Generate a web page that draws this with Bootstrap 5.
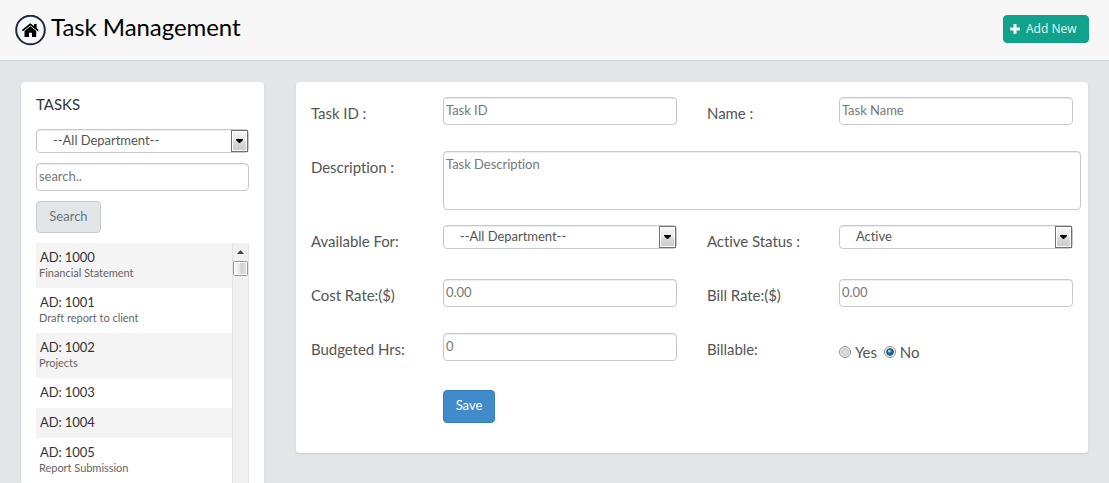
<!DOCTYPE html>
<html lang="en">
<head>
<meta charset="utf-8">
<meta name="viewport" content="width=device-width, initial-scale=1">
<title>Task Management</title>
<link rel="stylesheet" href="https://cdn.jsdelivr.net/npm/bootstrap@5.3.0/dist/css/bootstrap.min.css">
<style>
  body { font-family: Lato, "Liberation Sans", sans-serif; font-size: 13px; line-height: 20px; color: #555; background: #e2e6e9; height: 483px; overflow: hidden; }
  .topbar { height: 61px; background: #f7f7f7; border-bottom: 1px solid #d3d6db; padding: 0 20px 0 15px; }
  .page-title { font-size: 24px; line-height: 30px; color: #000; margin: -6px 0 0 5px; font-weight: 400; letter-spacing: -.06px; }
  .btn-add { --bs-btn-color: #e9f6f3; --bs-btn-bg: #10a28b; --bs-btn-border-color: #10a28b; font: 12px/18px "Open Sans", sans-serif; height: 28px; width: 86px; padding: 0 0 0 6px; border-radius: 4px; margin-top: -3px; }
  .btn-add span { padding-left: 6px; }
  .panel { background: #fff; border: 0; border-radius: 4px; box-shadow: 0 1px 2px rgba(0,0,0,.12); }
  .workspace { padding: 21px 21px 0; gap: 32px; }
  .side-panel { width: 243px; height: 401px; padding: 13px 15px 0; overflow: hidden; border-radius: 4px 4px 0 0; }
  .form-panel { width: 792px; height: 371px; padding-top: 15px; }
  .panel-heading { font-size: 15px; line-height: 20px; color: #333; margin: -1px 0 15px; font-weight: 400; }
  .form-control { height: 28px; min-height: 0; padding: 0 2px 2px; font-size: 13px; line-height: 20px; border: 1px solid #c8c8c8; border-radius: 4px; box-shadow: inset 0 1px 1px rgba(0,0,0,.075); letter-spacing: -.03px; }
  .form-control::placeholder { color: #777; }
  .form-panel .form-control { padding-bottom: 3px; }
  textarea.form-control { height: 59px; width: calc(100% + 8px); padding-top: 2px; resize: none; display: block; }
  .picker { height: 24px; border: 1px solid #c8c8c8; border-radius: 4px; padding-left: 16px; box-shadow: inset 0 1px 1px rgba(0,0,0,.075); line-height: 21px; letter-spacing: -.03px; }
  .picker svg { flex: none; }
  .field { padding: 0 15px; }
  .form-row { height: 54px; }
  .form-row.tall { height: 74px; }
  .form-row.last { height: 57px; }
  .form-row label.field { padding-top: 6px; font-size: 15px; letter-spacing: -.05px; }
  .btn-search { --bs-btn-color: #6b7580; --bs-btn-bg: #e2e6e9; --bs-btn-border-color: #c8ccd0; width: 65px; height: 32px; font-size: 13px; line-height: 20px; padding: 0 0 2px; border-radius: 4px; margin: 10px 0; }
  .search-box { margin-top: 10px; }
  .btn-save { --bs-btn-bg: #428bca; --bs-btn-border-color: #357ebd; width: 52px; height: 33px; font-size: 13px; line-height: 20px; padding: 0 0 4px; border-radius: 4px; }
  .task-scroller { height: 240px; overflow: hidden; }
  .task-list { width: 196px; }
  .task-list .list-group-item { flex: none; height: 45px; padding: 4px 0 0 3px; border: 0; background: #fff; }
  .task-list .list-group-item:nth-child(odd) { background: #f4f4f4; }
  .task-list .brief { height: 30px; }
  .task-name { font-size: 13px; line-height: 20px; color: #333; padding-left: 1px; letter-spacing: -.1px; }
  .task-note { font-size: 11px; line-height: 12px; color: #666; letter-spacing: -.03px; }
  .scroll-track { width: 17px; background: #f0f0f0; border-left: 1px solid #e3e3e3; border-right: 1px solid #e3e3e3; }
  .radio-group { font-size: 15px; padding-top: 9px; }
  .radio-group span { margin: 0 7px 0 4px; letter-spacing: -.1px; }
</style>
</head>
<body>
<svg class="position-absolute" width="0" height="0">
  <defs>
    <linearGradient id="face" x2="0" y2="1"><stop stop-color="#f4f4f4"/><stop offset=".5" stop-color="#e9e9e9"/><stop offset=".55" stop-color="#dadada"/><stop offset="1" stop-color="#cccccc"/></linearGradient>
    <linearGradient id="thumb"><stop stop-color="#f8f8f8"/><stop offset=".45" stop-color="#e6e6e7"/><stop offset=".55" stop-color="#cfcfd2"/><stop offset="1" stop-color="#e2e2e4"/></linearGradient>
    <symbol id="drop" viewBox="0 0 17 22"><rect x=".5" y=".5" width="16" height="21" fill="#fff" stroke="#707070"/><rect x="2" y="2" width="13" height="18" fill="url(#face)"/><path d="M5 9h7v1l-3 3H8l-3-3z"/></symbol>
  </defs>
</svg>
<header class="topbar d-flex align-items-center justify-content-between">
  <div class="d-flex align-items-center">
    <svg width="31" height="31" viewBox="0 0 31 31"><circle cx="15.500" cy="15" r="14.300" fill="none" stroke="#1f2b3a" stroke-width="2"/><path d="M7.400 15.600 15.300 9.400 23.300 15.600" fill="none" stroke="#000" stroke-width="1.700"/><path d="M19 9h2.600v5L19 11.800z"/><path d="M9.500 16.100l5.800-4.900 5.900 4.900V22h-4.200v-4.300h-3V22H9.500z"/></svg>
    <h1 class="page-title">Task Management</h1>
  </div>
  <button class="btn btn-add d-flex align-items-center" type="button"><svg width="10" height="10" viewBox="0 0 10 10"><path d="M3.500 0h3v3.500H10v3H6.500V10h-3V6.500H0v-3h3.500z" fill="#f4fbf9"/></svg><span>Add New</span></button>
</header>

<main class="workspace d-flex align-items-start">
  <aside class="panel side-panel">
    <h2 class="panel-heading">TASKS</h2>
    <div class="picker d-flex justify-content-between"><span>--All Department--</span><svg width="17" height="22"><use href="#drop"/></svg></div>
    <input class="form-control search-box" placeholder="search..">
    <button class="btn btn-search" type="button">Search</button>
    <div class="d-flex task-scroller">
      <div class="list-group list-group-flush task-list">
        <div class="list-group-item"><div class="task-name">AD: 1000</div><div class="task-note">Financial Statement</div></div>
        <div class="list-group-item"><div class="task-name">AD: 1001</div><div class="task-note">Draft report to client</div></div>
        <div class="list-group-item"><div class="task-name">AD: 1002</div><div class="task-note">Projects</div></div>
        <div class="list-group-item brief"><div class="task-name">AD: 1003</div></div>
        <div class="list-group-item brief"><div class="task-name">AD: 1004</div></div>
        <div class="list-group-item"><div class="task-name">AD: 1005</div><div class="task-note">Report Submission</div></div>
      </div>
      <div class="scroll-track">
        <svg class="d-block" width="15" height="34" viewBox="0 0 15 34"><path d="M4 11 7.500 7 11 11z" fill="#444"/><rect x=".5" y="18.500" width="14" height="14" rx="1" fill="#fff" stroke="#979797"/><rect x="2" y="20" width="11" height="11" fill="url(#thumb)"/></svg>
      </div>
    </div>
  </aside>

  <form class="panel form-panel">
    <div class="row g-0 form-row">
      <label class="col-2 field">Task ID :</label><div class="col-4 field"><input class="form-control" placeholder="Task ID"></div>
      <label class="col-2 field">Name :</label><div class="col-4 field"><input class="form-control" placeholder="Task Name"></div>
    </div>
    <div class="row g-0 form-row tall">
      <label class="col-2 field">Description :</label><div class="col-10 field"><textarea class="form-control" placeholder="Task Description"></textarea></div>
    </div>
    <div class="row g-0 form-row">
      <label class="col-2 field">Available For:</label>
      <div class="col-4 field"><div class="picker d-flex justify-content-between"><span>--All Department--</span><svg width="17" height="22"><use href="#drop"/></svg></div></div>
      <label class="col-2 field">Active Status :</label>
      <div class="col-4 field"><div class="picker d-flex justify-content-between"><span>Active</span><svg width="17" height="22"><use href="#drop"/></svg></div></div>
    </div>
    <div class="row g-0 form-row">
      <label class="col-2 field">Cost Rate:($)</label><div class="col-4 field"><input class="form-control" placeholder="0.00"></div>
      <label class="col-2 field">Bill Rate:($)</label><div class="col-4 field"><input class="form-control" placeholder="0.00"></div>
    </div>
    <div class="row g-0 form-row last">
      <label class="col-2 field">Budgeted Hrs:</label><div class="col-4 field"><input class="form-control" placeholder="0"></div>
      <label class="col-2 field">Billable:</label>
      <div class="col-4 field"><div class="radio-group d-flex align-items-center">
        <svg width="12" height="12" viewBox="0 0 12 12"><circle cx="6" cy="6" r="5.500" fill="#f4f4f4" stroke="#8e8f8f"/><circle cx="6" cy="6" r="3.500" fill="#d8dadd" stroke="#c4c6ca"/></svg><span>Yes</span>
        <svg width="12" height="12" viewBox="0 0 12 12"><circle cx="6" cy="6" r="5.500" fill="#f4f4f4" stroke="#8e8f8f"/><circle cx="6" cy="6" r="3.300" fill="#1879ab" stroke="#173a55"/><circle cx="5.300" cy="5" r="1.300" fill="#9fe0f7"/></svg><span>No</span>
      </div></div>
    </div>
    <div class="row g-0"><div class="col-4 offset-2 field"><button class="btn btn-primary btn-save" type="button">Save</button></div></div>
  </form>
</main>
<script src="https://cdn.jsdelivr.net/npm/bootstrap@5.3.0/dist/js/bootstrap.bundle.min.js"></script>
</body>
</html>
